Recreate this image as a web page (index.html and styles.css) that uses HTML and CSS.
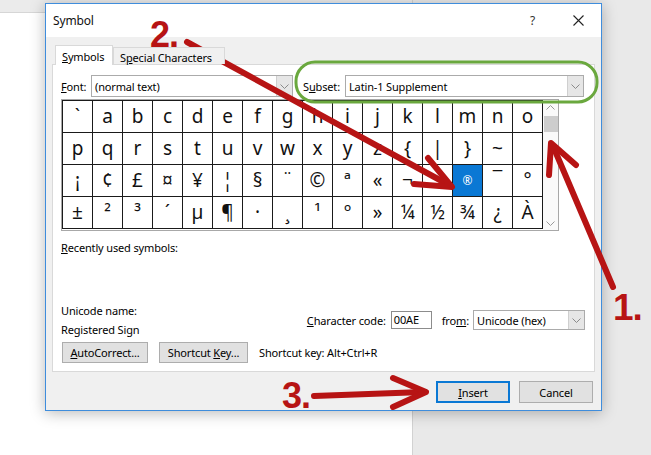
FILE: index.html
```html
<!DOCTYPE html>
<html>
<head>
<meta charset="utf-8">
<title>Symbol</title>
<link rel="stylesheet" href="styles.css">
</head>
<body>
<div class="desk">
  <div class="page"><div class="ribbon"></div></div>
  <div class="side"></div>
</div>

<div class="dialog">
  <div class="titlebar">
    <span class="title">Symbol</span>
    <span class="help">?</span>
    <svg class="close" width="11" height="11" viewBox="0 0 11 11"><path d="M0.5 0.5 L10.5 10.5 M10.5 0.5 L0.5 10.5" stroke="#222" stroke-width="1.1" fill="none"/></svg>
  </div>
  <div class="body">
    <div class="tabs">
      <div class="tab active"><u>S</u>ymbols</div>
      <div class="tab">S<u>p</u>ecial Characters</div>
    </div>
    <div class="panel">
      <div class="font-row">
        <label class="lbl-font"><u>F</u>ont:</label>
        <div class="select sel-font"><span class="val">(normal text)</span><span class="drop"><svg width="9" height="5" viewBox="0 0 9 5"><path d="M0.5 0.5 L4.5 4.5 L8.5 0.5" stroke="#8a8a8a" fill="none"/></svg></span></div>
        <label class="lbl-subset">S<u>u</u>bset:</label>
        <div class="select sel-subset"><span class="val">Latin-1 Supplement</span><span class="drop"><svg width="9" height="5" viewBox="0 0 9 5"><path d="M0.5 0.5 L4.5 4.5 L8.5 0.5" stroke="#8a8a8a" fill="none"/></svg></span></div>
      </div>
      <div class="gridbox">
        <div class="grid">
          <div class="cell">`</div><div class="cell">a</div><div class="cell">b</div><div class="cell">c</div><div class="cell">d</div><div class="cell">e</div><div class="cell">f</div><div class="cell">g</div><div class="cell">h</div><div class="cell">i</div><div class="cell">j</div><div class="cell">k</div><div class="cell">l</div><div class="cell">m</div><div class="cell">n</div><div class="cell">o</div>
          <div class="cell">p</div><div class="cell">q</div><div class="cell">r</div><div class="cell">s</div><div class="cell">t</div><div class="cell">u</div><div class="cell">v</div><div class="cell">w</div><div class="cell">x</div><div class="cell">y</div><div class="cell">z</div><div class="cell">{</div><div class="cell">|</div><div class="cell">}</div><div class="cell">~</div><div class="cell"></div>
          <div class="cell">¡</div><div class="cell">¢</div><div class="cell">£</div><div class="cell">¤</div><div class="cell">¥</div><div class="cell">¦</div><div class="cell">§</div><div class="cell">¨</div><div class="cell">©</div><div class="cell">ª</div><div class="cell">«</div><div class="cell">¬</div><div class="cell"></div><div class="cell selected">®</div><div class="cell">¯</div><div class="cell">°</div>
          <div class="cell">±</div><div class="cell">²</div><div class="cell">³</div><div class="cell">´</div><div class="cell">µ</div><div class="cell">¶</div><div class="cell">·</div><div class="cell">¸</div><div class="cell">¹</div><div class="cell">º</div><div class="cell">»</div><div class="cell">¼</div><div class="cell">½</div><div class="cell">¾</div><div class="cell">¿</div><div class="cell">À</div>
        </div>
        <div class="scrollbar">
          <svg class="sb-arrow" width="9" height="5" viewBox="0 0 9 5"><path d="M0.5 4.5 L4.5 0.5 L8.5 4.5" stroke="#9a9a9a" fill="none"/></svg>
          <div class="thumb"></div>
          <div class="sb-space"></div>
          <svg class="sb-arrow" width="9" height="5" viewBox="0 0 9 5"><path d="M0.5 0.5 L4.5 4.5 L8.5 0.5" stroke="#9a9a9a" fill="none"/></svg>
        </div>
      </div>
      <div class="recent"><u>R</u>ecently used symbols:</div>
      <div class="info">
        <div class="names">
          <div>Unicode name:</div>
          <div>Registered Sign</div>
        </div>
        <div class="code-row">
          <label><u>C</u>haracter code:</label>
          <div class="input">00AE</div>
          <label class="lbl-from">fro<u>m</u>:</label>
          <div class="select sel-from"><span class="val">Unicode (hex)</span><span class="drop"><svg width="9" height="5" viewBox="0 0 9 5"><path d="M0.5 0.5 L4.5 4.5 L8.5 0.5" stroke="#8a8a8a" fill="none"/></svg></span></div>
        </div>
      </div>
      <div class="actions">
        <button class="btn btn-auto"><u>A</u>utoCorrect...</button>
        <button class="btn btn-short">Shortcut <u>K</u>ey...</button>
        <span class="shortcut">Shortcut key: Alt+Ctrl+R</span>
      </div>
    </div>
    <div class="footer">
      <button class="btn btn-foot primary"><u>I</u>nsert</button>
      <button class="btn btn-foot">Cancel</button>
    </div>
  </div>
</div>

<svg class="annot" width="651" height="455" viewBox="0 0 651 455">
  <rect x="296" y="62" width="301" height="40" rx="19" ry="19" fill="none" stroke="#6aa83e" stroke-width="3"/>
  <g stroke="#b71414" stroke-width="6" fill="none" stroke-linecap="round" stroke-linejoin="round">
    <path d="M187 42 L449 185"/>
    <path d="M428 158 L452 187 L414 184"/>
    <path d="M613 287 L553 146"/>
    <path d="M549 175 L551 143 L576 165"/>
    <path d="M314 396 L423 392"/>
    <path d="M393 378 L426 392 L393 407"/>
  </g>
</svg>
<div class="mark m2">2.</div>
<div class="mark m1">1.</div>
<div class="mark m3">3.</div>
</body>
</html>
```

FILE: styles.css
```css
html, body {
  margin: 0;
  padding: 0;
}
body {
  width: 651px;
  height: 455px;
  position: relative;
  overflow: hidden;
  font-family: "Noto Sans", "Open Sans", sans-serif;
  font-size: 11px;
  letter-spacing: -0.15px;
  color: #000;
}
u { text-decoration: underline; text-underline-offset: 1px; }

.desk {
  display: flex;
  height: 455px;
}
.page {
  width: 412px;
  background: #fff;
  border-right: 1px solid #d2d2d2;
}
.ribbon {
  height: 12px;
  background: #ebebeb;
  border-bottom: 1px solid #d6d6d6;
}
.side {
  flex: 1;
  background: #e9e9e9;
}

.dialog {
  position: absolute;
  left: 45px;
  top: 3px;
  width: 557px;
  height: 408px;
  box-sizing: border-box;
  border: 1px solid #3f8ddc;
  background: #f0f0f0;
  box-shadow: 0 2px 14px rgba(0, 0, 0, 0.28);
  display: flex;
  flex-direction: column;
}
.titlebar {
  height: 33px;
  background: #fff;
  display: flex;
  align-items: center;
  padding-left: 7px;
  font-size: 12px;
  color: #111;
}
.title { flex: 1; }
.help {
  font-size: 12px;
  color: #333;
  margin-right: 38px;
}
.close { margin-right: 17px; }

.body {
  flex: 1;
  padding: 8px 6px 0;
  display: flex;
  flex-direction: column;
}
.tabs {
  display: flex;
  align-items: flex-end;
  height: 19px;
  margin-left: 3px;
  position: relative;
  z-index: 1;
}
.tab {
  box-sizing: border-box;
  height: 17px;
  border: 1px solid #d9d9d9;
  border-bottom: none;
  background: #f0f0f0;
  padding: 3px 6px 0;
  line-height: 13px;
  width: 112px;
}
.tab.active {
  background: #fff;
  height: 20px;
  margin-bottom: -1px;
  width: 58px;
  padding-top: 4px;
  line-height: 14px;
  padding-left: 6px;
}
.panel {
  height: 308px;
  box-sizing: border-box;
  background: #fff;
  border: 1px solid #d9d9d9;
  padding: 10px 0 0 8px;
}
.font-row {
  display: flex;
  align-items: center;
  height: 22px;
}
.lbl-font { width: 30px; }
.lbl-subset { width: 42px; margin-left: 10px; }
.select {
  box-sizing: border-box;
  height: 22px;
  border: 1px solid #ababab;
  background: #fff;
  display: flex;
  align-items: stretch;
}
.select .val {
  flex: 1;
  padding-left: 3px;
  display: flex;
  align-items: center;
}
.select .drop {
  width: 15px;
  background: #e6e6e6;
  border-left: 1px solid #cfcfcf;
  display: flex;
  align-items: center;
  justify-content: center;
}
.sel-font { width: 202px; }
.sel-subset { width: 239px; }

.gridbox {
  margin-top: 2px;
  width: 498px;
  height: 132px;
  box-sizing: border-box;
  border: 1px solid #a8a8a8;
  display: flex;
}
.grid {
  display: grid;
  grid-template-columns: repeat(16, 30px);
  grid-template-rows: repeat(4, 32px);
  border-left: 1px solid #1a1a1a;
  border-top: 1px solid #1a1a1a;
  height: 129px;
  box-sizing: border-box;
}
.cell {
  box-sizing: border-box;
  border-right: 1px solid #1a1a1a;
  border-bottom: 1px solid #1a1a1a;
  display: flex;
  align-items: center;
  justify-content: center;
  font-family: "Noto Sans", sans-serif;
  font-size: 19px;
  letter-spacing: 0;
  color: #111;
  line-height: 1;
}
.cell.selected {
  background: #0a78d4;
  color: #fff;
  font-size: 12px;
  border-color: #1a1a1a;
}
.scrollbar {
  flex: 1;
  background: #fafafa;
  display: flex;
  flex-direction: column;
  align-items: center;
  padding: 5px 0 4px;
}
.thumb {
  width: 14px;
  height: 16px;
  background: #cdcdcd;
  margin-top: 6px;
}
.sb-space { flex: 1; }

.recent {
  margin-top: 9px;
  height: 16px;
  line-height: 16px;
}
.info {
  margin-top: 45px;
  display: flex;
  align-items: center;
  padding-right: 9px;
}
.names { flex: 1; line-height: 19px; }
.code-row {
  display: flex;
  align-items: center;
}
.input {
  box-sizing: border-box;
  width: 41px;
  height: 18px;
  border: 1px solid #8c8c8c;
  margin-left: 5px;
  padding-left: 2px;
  line-height: 16px;
}
.lbl-from { margin-left: 10px; }
.sel-from {
  width: 112px;
  height: 20px;
  margin-left: 4px;
}
.actions {
  margin-top: 3px;
  display: flex;
  align-items: center;
  padding-left: 1px;
}
.btn {
  box-sizing: border-box;
  height: 21px;
  background: #e1e1e1;
  border: 1px solid #adadad;
  font-family: "Noto Sans", "Open Sans", sans-serif;
  font-size: 11px;
  letter-spacing: -0.15px;
  color: #000;
  padding: 0;
  margin: 0;
}
.btn-auto { width: 86px; }
.btn-short { width: 89px; margin-left: 11px; }
.shortcut { margin-left: 11px; }

.footer {
  display: flex;
  justify-content: flex-end;
  padding-top: 9px;
  padding-right: 2px;
}
.btn-foot {
  width: 74px;
  height: 22px;
  margin-left: 9px;
}
.btn-foot.primary {
  border: 2px solid #0a78d4;
}

.annot {
  position: absolute;
  left: 0;
  top: 0;
  pointer-events: none;
}
.mark {
  position: absolute;
  font-family: "Liberation Sans", Arial, sans-serif;
  font-weight: bold;
  font-size: 36px;
  line-height: 24px;
  color: #b71414;
  letter-spacing: -1px;
}
.m2 { left: 150px; top: 23px; }
.m1 { left: 613px; top: 296px; font-size: 37px; }
.m3 { left: 282px; top: 384px; }
```
